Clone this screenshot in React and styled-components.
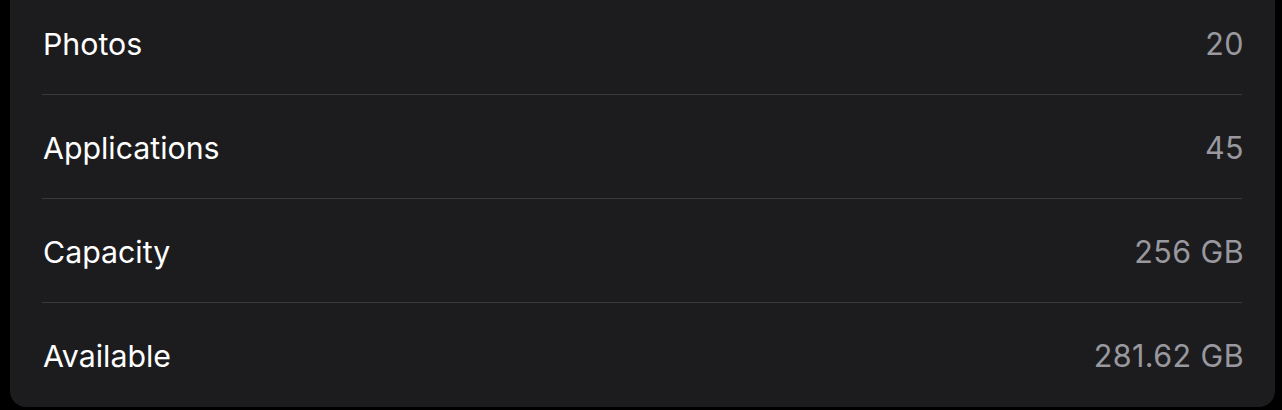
import React from 'react'
import styled, { createGlobalStyle } from 'styled-components'

const GlobalStyle = createGlobalStyle`
  html, body {
    margin: 0;
    padding: 0;
    background: #000;
    overflow: hidden;
  }
  body {
    font-family: Inter, "Noto Sans", sans-serif;
    -webkit-font-smoothing: antialiased;
  }
`

const Card = styled.div`
  margin: -9px 7px 0 10px;
  padding: 0 33px 0 32px;
  background: #1c1c1e;
  border-radius: 0 0 16px 16px;
`

const Row = styled.div`
  display: flex;
  align-items: center;
  justify-content: space-between;
  box-sizing: border-box;
  height: 104px;
  padding-top: 2px;
  border-bottom: 1px solid ${({ last }) => (last ? 'transparent' : '#3a3a3c')};
`

const Label = styled.span`
  color: #fff;
  font-size: 30.3px;
  padding-left: 1px;
`

const Value = styled.span`
  color: #98989e;
  font-size: 30.5px;
  letter-spacing: 0.4px;
  margin-right: -2px;
`

const rows = [
  ['Photos', '20'],
  ['Applications', '45'],
  ['Capacity', '256 GB'],
  ['Available', '281.62 GB']
]

const App = () => (
  <>
    <GlobalStyle />
    <Card>
      { rows.map(([label, value], i) => (
        <Row key={ label } last={ i === rows.length - 1 }>
          <Label>{ label }</Label>
          <Value>{ value }</Value>
        </Row>
      )) }
    </Card>
  </>
)

export default App
